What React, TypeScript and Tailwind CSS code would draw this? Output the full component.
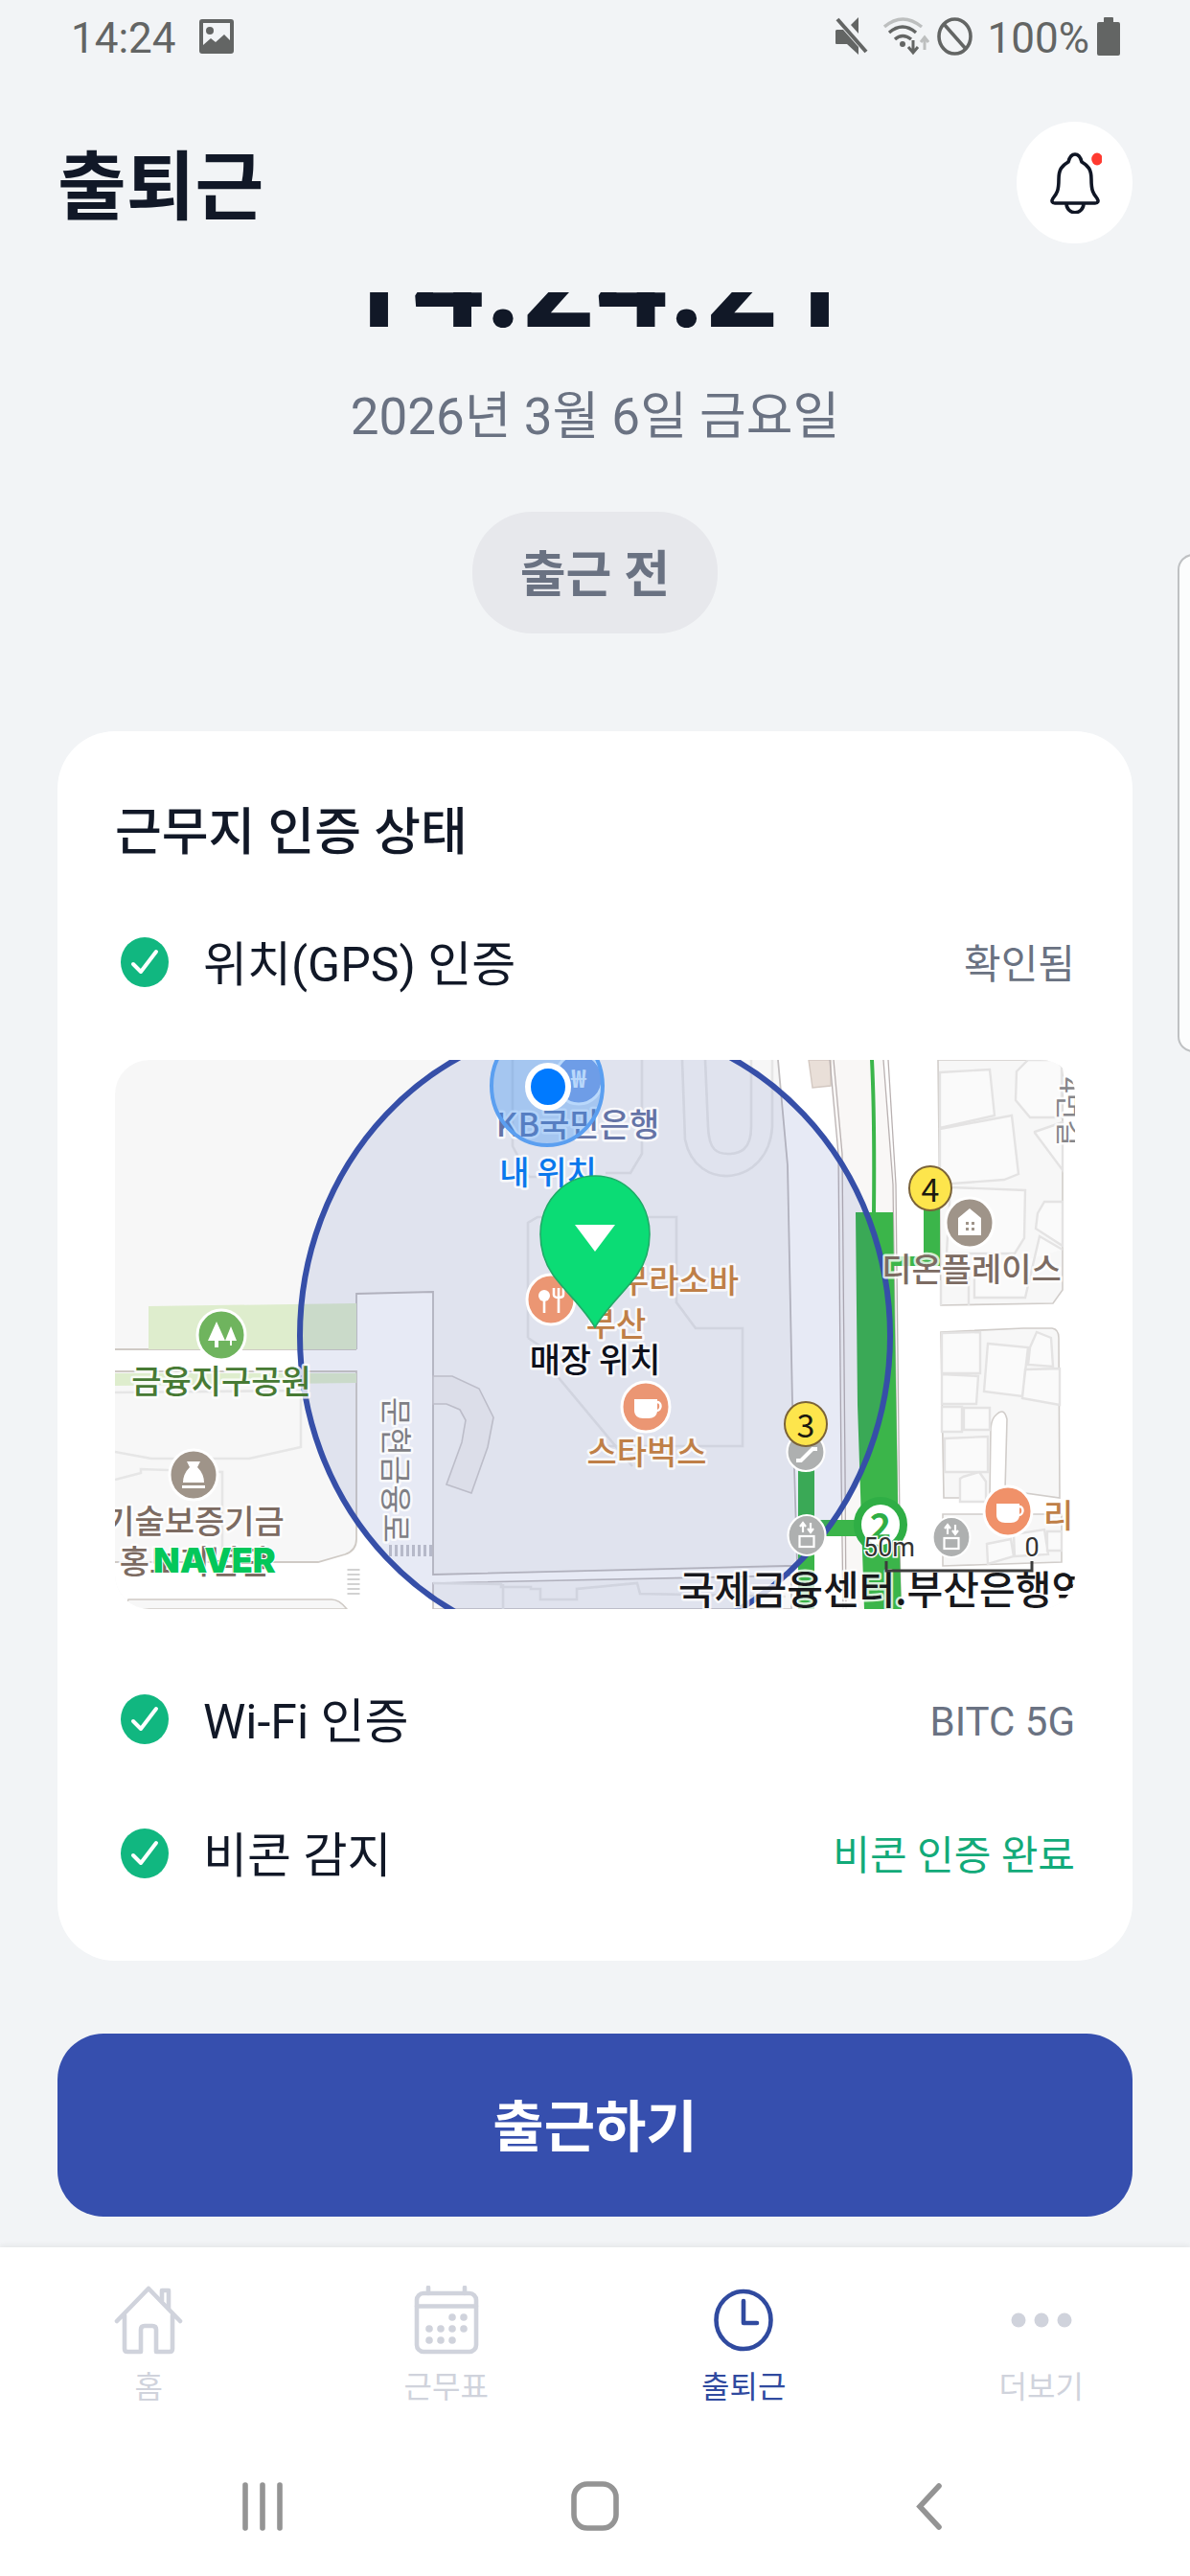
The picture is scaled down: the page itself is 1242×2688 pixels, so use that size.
import { useState } from "react";
import type { ReactNode } from "react";

type Check = { label: string; value: string; tone: string };
type MapLabelProps = {
  x: number;
  y: number;
  color: string;
  size?: number;
  anchor?: "start" | "middle" | "end";
  weight?: number;
  children: ReactNode;
};

const gpsCheck: Check = { label: "위치(GPS) 인증", value: "확인됨", tone: "text-gray-500" };
const otherChecks: Check[] = [
  { label: "Wi-Fi 인증", value: "BITC 5G", tone: "text-gray-500" },
  { label: "비콘 감지", value: "비콘 인증 완료", tone: "text-[#12aa79]" },
];

function StatusBar() {
  return (
    <div className="flex h-20 items-center justify-between pl-[74px] pr-[73px] text-[44px] leading-none text-[#636564]">
      <div className="flex items-center gap-6">
        <span>14:24</span>
        <svg className="mb-1 h-9 w-9" viewBox="0 0 36 36" fill="currentColor">
          <path
            fillRule="evenodd"
            d="M3 0h30a3 3 0 0 1 3 3v30a3 3 0 0 1-3 3H3a3 3 0 0 1-3-3V3a3 3 0 0 1 3-3Zm1 4v23l8-7 5 4 9-8 6 6V4Z"
          />
          <circle cx="11" cy="12" r="4" />
        </svg>
      </div>
      <div className="flex items-center">
        {/* 무음 */}
        <svg className="mb-1 mr-4 h-10 w-[34px]" viewBox="0 0 34 40" fill="currentColor">
          <path d="M1 13h7l16 18v8L12 28H1a1 1 0 0 1-1-1V14ZM24 0v17l-8-9Z" />
          <path d="m2 2 30 34" stroke="currentColor" strokeWidth="4" />
        </svg>
        {/* 와이파이 */}
        <svg className="mb-1 mr-2 h-10 w-12" viewBox="0 0 48 40" fill="none" stroke="currentColor" strokeWidth="3.4">
          <path d="M1 10Q20-6 40 10" stroke="#bdbfbf" />
          <path d="M6 16q14-12 28 0M12 23q8-7 17 0" />
          <circle cx="20" cy="28" r="3" fill="currentColor" stroke="none" />
          <path d="M31 24v12m-5-5 5 6 5-6" strokeWidth="3" />
          <path d="M43 34V22m-4 4 4-5 4 5" stroke="#bdbfbf" strokeWidth="3" />
        </svg>
        <svg className="mb-1 mr-4 h-10 w-[37px]" viewBox="0 0 37 40" fill="none" stroke="currentColor" strokeWidth="3.6">
          <ellipse cx="18.5" cy="20" rx="16.5" ry="18" />
          <path d="m7 7 23 26" />
        </svg>
        <span className="mr-2">100%</span>
        <svg className="mb-1 h-10 w-6" viewBox="0 0 24 40" fill="currentColor">
          <path d="M8 0h8a1 1 0 0 1 1 1v4h5a2 2 0 0 1 2 2v31a2 2 0 0 1-2 2H2a2 2 0 0 1-2-2V7a2 2 0 0 1 2-2h5V1a1 1 0 0 1 1-1Z" />
        </svg>
      </div>
    </div>
  );
}

function Header() {
  return (
    <header className="flex items-center justify-between px-[60px] pb-[51px] pt-[47px]">
      <h1 className="pt-3 text-[78px] font-bold leading-[88px]">출퇴근</h1>
      <button
        type="button"
        aria-label="알림"
        className="flex h-[127px] w-[121px] items-center justify-center rounded-[50%] bg-white"
      >
        <svg className="h-[64px] w-[56px]" viewBox="0 0 56 64" fill="none" stroke="#101625" strokeWidth="3.6" strokeLinejoin="round">
          <path d="M21 10c1-4 3-8 7-8s6 4 7 8c7 4 10 8 10 18 0 12 2 15 6 20 2 3 1 5-2 5H7c-3 0-4-2-2-5 4-5 6-8 6-20 0-10 3-14 10-18Z" />
          <path d="M19 53c0 13 18 13 18 0" />
          <ellipse cx="51" cy="7" rx="5.8" ry="6.5" fill="#ff3a30" stroke="none" />
        </svg>
      </button>
    </header>
  );
}

function CheckRow({ check }: { check: Check }) {
  return (
    <div className="flex h-16 items-center pl-1.5">
      <svg className="mr-[36px] h-[52px] w-[50px] shrink-0" viewBox="0 0 50 52">
        <ellipse cx="25" cy="26" rx="25" ry="26" fill="#11b780" />
        <path d="m13 28 8 8 16-21" fill="none" stroke="#fff" strokeWidth="4" strokeLinecap="round" strokeLinejoin="round" />
      </svg>
      <span className="pt-1.5 text-[50px] leading-[64px]">{check.label}</span>
      <span className={`ml-auto pt-1.5 text-[42px] leading-[64px] ${check.tone}`}>{check.value}</span>
    </div>
  );
}

function MapLabel({ x, y, color, size = 34, anchor = "middle", weight = 500, children }: MapLabelProps) {
  return (
    <text
      x={x}
      y={y}
      fill={color}
      fontSize={size}
      fontWeight={weight}
      textAnchor={anchor}
      stroke="#fff"
      strokeOpacity="0.8"
      strokeWidth="5"
      strokeLinejoin="round"
      paintOrder="stroke"
    >
      {children}
    </text>
  );
}

function Poi({ x, y, color, children }: { x: number; y: number; color: string; children: ReactNode }) {
  return (
    <g transform={`translate(${x} ${y})`}>
      <ellipse rx="25" ry="26" fill={color} stroke="#fff" strokeWidth="3" />
      {children}
    </g>
  );
}

function Cup() {
  return (
    <>
      <path d="M-12-8h24V4c0 5-4 8-9 8h-6c-5 0-9-3-9-8Z" fill="#fff" />
      <path d="M11-5c6-1 6 9 0 9" fill="none" stroke="#fff" strokeWidth="2.5" />
    </>
  );
}

function Elevator({ x, y }: { x: number; y: number }) {
  return (
    <g transform={`translate(${x} ${y})`} fill="none" stroke="#fff" strokeWidth="2.2">
      <ellipse rx="19.5" ry="21" fill="#aeb0b0" />
      <rect x="-7.5" y="1" width="15" height="11" />
      <path d="M-4-3v-9m-3 3 3-4 3 4M4-13v9m-3-3 3 4 3-4" />
    </g>
  );
}

function ExitBadge({ x, y, n }: { x: number; y: number; n: number }) {
  return (
    <>
      <ellipse cx={x} cy={y} rx="22" ry="23" fill="#fde54c" stroke="#7b6338" strokeWidth="2" />
      <text x={x} y={y + 14} fontSize="34" fontWeight="400" textAnchor="middle" fill="#1c1a10">
        {n}
      </text>
    </>
  );
}

function WorkplaceMap() {
  return (
    <svg
      viewBox="0 0 1002 573"
      role="img"
      aria-label="근무지 지도"
      className="block w-full rounded-[36px] font-['Noto_Sans_CJK_KR',sans-serif]"
    >
      <rect width="1002" height="573" fill="#f7f7f7" />

      {/* 도로 */}
      <g fill="#fff">
        <path d="M252 573V244L332 242V537L706 530V573Z" />
        <path d="M0 302H260V325H0Z" />
        <path d="M692 0 702 110 707 358 710 573H777V0Z" />
        <path d="M724 0H1002V573H710V0Z" />
        <path d="M0 524H212L240 516Q252 512 252 500V573H0Z" />
      </g>
      <path d="M252 302V244L332 242V537L700 528H712L707 358 702 110 692 0" fill="none" stroke="#c2bfc0" strokeWidth="1.8" />
      <path d="M0 302H252M0 325H252V500Q252 512 240 516L212 524H0" fill="none" stroke="#cfcac5" strokeWidth="1.8" />
      <path d="M332 573V546L706 538V573Z" fill="#f7f7f7" stroke="#c2bfc0" strokeWidth="1.6" />
      <path d="M14 563H226Q234 563 242 573H10Z" fill="#f7f7f7" stroke="#cfcac5" strokeWidth="1.6" />
      <path d="M35 257 252 254V302H35ZM0 327H252V337L0 340Z" fill="#deedcd" />
      <path d="M332 330h20l28 13 15 30-6 31-17 48-26-9 16-44 4-23-6-11-14-6h-14Z" fill="#f3f2f2" stroke="#cfcccd" strokeWidth="1.6" />

      {/* 건물 윤곽 */}
      <g fill="none" stroke="#e6e6e6" strokeWidth="2.6">
        <path d="M0 409 38 416H140L194 404V345L0 347M0 438 27 431V427L112 430V522" />
        <path d="M592 0 595 83C606 139 682 132 686 70V0M616 0 619 70C620 94 628 98 640 98S664 94 664 70V0" />
        <path d="M415 0V90L432 122H460M550 0V98L538 118H512M431 290V170L441 164H586V253L606 280H655V403H510M431 290 455 306V322L540 424" />
        <path d="M332 546 403 547V550H434V552H444V563H482V552L545 546L548 557 700 560M405 547V573" />
      </g>
      <g stroke="#d1cdca" strokeWidth="1.6" fill="#f7f7f7">
        <path d="M859 0H976Q989 2 989 16V240L979 254 862 256Z" />
        <path d="M862 284 948 280H978Q985 281 985 290L986 457 929 449 931 375Q928 362 920 370 915 374 914 384L913 457H865Z" />
        <path d="M864 474H988V524L864 528Z" />
      </g>
      <g stroke="#e4e3e3" strokeWidth="2.4" fill="#fafafa">
        <path d="M861 13 913 10 918 58 861 71Z" />
        <path d="M861 72 936 58 943 119 928 125 861 130Z" />
        <path d="M941 12 953 0H988V60H955L940 42Z" />
        <path d="M872 133 950 136 949 186 939 202H868Z" />
        <path d="M960 75 989 65V115L960 76ZM963 160 970 148H989V194L961 176Z" />
        <path d="M897 224V248H950L965 184 989 198M862 230V256M891 226V256" />
        <path d="M863 285 903 284V327H863ZM863 328 901 330 899 359H863ZM863 362H884V388H863ZM886 363H913V386H886Z" />
        <path d="M911 296 953 300 947 351 907 346ZM955 300 962 284 977 290 979 320 953 318ZM950 323 986 322V360L947 353Z" />
        <path d="M866 395 911 393V430H866ZM885 435 902 430 909 440V461H882V437Z" />
        <path d="M910 505 935 500 938 518 911 526ZM938 495 970 490 974 516 939 518ZM973 492H988V512H973Z" />
      </g>

      {/* 대로와 지하철 노선 */}
      <path d="M746 0 756 98 759 573H820L814 130 802 0Z" fill="#f9f7f6" />
      <path d="M724 0H747V27L728 29Z" fill="#e9dfd8" stroke="#d3c8c1" strokeWidth="1.4" />
      <path
        d="M746 0 755 98 758 430 760 573M750 0 759 98 762 430 763 573M802 0 812 130 818 573M807 0 815 130 820 573"
        fill="none"
        stroke="#b9b1b1"
        strokeWidth="1.3"
      />
      <g fill="#3bb54a">
        <path d="M773 159H812L817 460 821 573H782L775 360Z" />
        <path d="M713 425H730V573H713ZM735 480H780V497H735ZM844 150H861V215H812V205H844Z" />
        <path d="M790 0Q793 60 792 160" fill="none" stroke="#3bb54a" strokeWidth="4" />
      </g>

      {/* 횡단보도 */}
      <path d="M286 512H331" stroke="#c8c8cd" strokeWidth="12" strokeDasharray="3 3" />
      <path d="M249 531V561" stroke="#d2d2d2" strokeWidth="13" strokeDasharray="2 3" />

      {/* 인증 반경 */}
      <ellipse cx="501" cy="288" rx="308" ry="327" fill="#364fae" fillOpacity="0.12" stroke="#364fa8" strokeWidth="6" />

      {/* 장소 표시 */}
      <Poi x={111} y={287} color="#6fb45e">
        <path d="M-5-14-14 6h7v7h4V6h7ZM10-9 4 6h5v5h2V6h5Z" fill="#fff" />
      </Poi>
      <Poi x={82} y={433} color="#9f9489">
        <path d="M-7-14H7L4-8Q11-1 11 8H-11Q-11-1-4-8ZM-12 11H12V14H-12Z" fill="#fff" />
      </Poi>
      <Poi x={892} y={170} color="#9f9489">
        <path d="M0-15 12-5V13H-12V-5Z" fill="#fff" />
        <path d="M-4-1h3v3h-3ZM2-1h3v3H2ZM-4 5h3v3h-3ZM2 5h3v3H2Z" fill="#9f9489" />
      </Poi>
      <Poi x={455} y={250} color="#eb9673">
        <circle cx="-7" cy="-4" r="6" fill="#fff" />
        <path d="M-7 0V14M8-4V14M3-12V-5Q3-2 8-2T13-5V-12M8-12V0" fill="none" stroke="#fff" strokeWidth="2.6" />
      </Poi>
      <Poi x={554} y={362} color="#eb9673">
        <Cup />
      </Poi>
      <Poi x={932} y={471} color="#f09169">
        <Cup />
      </Poi>
      <Poi x={484} y={20} color="#8aa3e0">
        <text y="9" fontSize="26" fontWeight="700" textAnchor="middle" fill="#fff">
          ₩
        </text>
      </Poi>

      <MapLabel x={83} y={494} color="#7c6b62">기술보증기금</MapLabel>
      <MapLabel x={83} y={536} color="#7c6b62">홍보기념관</MapLabel>
      <MapLabel x={483} y={80} color="#6473a6">KB국민은행</MapLabel>
      <MapLabel x={651} y={243} color="#bf7f47" anchor="end">무라소바</MapLabel>
      <MapLabel x={523} y={288} color="#bf7f47">부산</MapLabel>
      <MapLabel x={555} y={422} color="#bf7f47">스타벅스</MapLabel>
      <MapLabel x={969} y={488} color="#bf7f47" anchor="start">리</MapLabel>
      <g transform="translate(281 428) rotate(90)">
        <MapLabel x={0} y={0} color="#7f7f85" size={33} weight={400}>문현금융로</MapLabel>
      </g>
      <g transform="translate(986 54) rotate(90)">
        <MapLabel x={0} y={0} color="#86868a" size={30} weight={400}>4번길</MapLabel>
      </g>
      <MapLabel x={111} y={348} color="#477a34">금융지구공원</MapLabel>
      <MapLabel x={894} y={231} color="#7c6b62">디온플레이스</MapLabel>

      <g transform="translate(721 409)" stroke="#fff">
        <ellipse rx="19.5" ry="20" fill="#aeb0b0" strokeWidth="2.2" />
        <path d="M-10 9h5L7-3h5" fill="none" strokeWidth="4" />
      </g>
      <Elevator x={722} y={496} />
      <Elevator x={873} y={498} />
      <ExitBadge x={721} y={380} n={3} />
      <ExitBadge x={851} y={134} n={4} />
      <ellipse cx="799" cy="485" rx="24" ry="25" fill="#fff" stroke="#2fae45" strokeWidth="8" />
      <text x="799" y="500" fontSize="38" fontWeight="700" textAnchor="middle" fill="#2fae45">
        2
      </text>
      <MapLabel x={588} y={568} color="#17181c" size={41} anchor="start">국제금융센터.부산은행역</MapLabel>

      {/* 내 위치 */}
      <ellipse cx="451" cy="27" rx="58" ry="62" fill="#3d93f5" fillOpacity="0.36" stroke="#5b9ff0" strokeWidth="4" />
      <ellipse cx="452" cy="28" rx="21" ry="22" fill="#007aff" stroke="#fff" strokeWidth="6" />
      <MapLabel x={452} y={130} color="#0a78ec">내 위치</MapLabel>

      {/* 매장 위치 */}
      <path
        d="M501 279C489 258 469 241 457 224 448 211 444 197 444 182 444 148 469 121 501 121S558 148 558 182C558 197 554 211 545 224 533 241 513 258 501 279Z"
        fill="#0bdc75"
        stroke="#1fab67"
        strokeWidth="1.6"
      />
      <path d="M480 172H522L501 200Z" fill="#fff" />
      <MapLabel x={501} y={326} color="#0d101b" size={35}>매장 위치</MapLabel>

      {/* 로고와 축척 */}
      <text x="40" y="535" fontFamily="Inter, sans-serif" fontSize="36" fontWeight="900" fill="#03c75a" stroke="#fff" strokeWidth="2" paintOrder="stroke">
        NAVER
      </text>
      <g fontFamily="Roboto, sans-serif" fontSize="27" textAnchor="middle" fill="#333" stroke="#fff" strokeWidth="3" paintOrder="stroke">
        <text x="808" y="518">50m</text>
        <text x="957" y="518">0</text>
      </g>
      <path d="M805 523V533H957V523" fill="none" stroke="#3c3c3c" strokeWidth="3" />
    </svg>
  );
}

const tabs = [
  {
    id: "home",
    label: "홈",
    icon: (
      <>
        <path d="M3 37 36 3 69 37M11 31V66Q11 69 14 69H28V46Q28 42 32 42H40Q44 42 44 46V69H58Q61 69 61 66V31" />
        <path d="M50 16V5H57V24" />
      </>
    ),
  },
  {
    id: "schedule",
    label: "근무표",
    icon: (
      <>
        <rect x="5" y="8" width="62" height="61" rx="7" />
        <path d="M5 21.5H67M17 2V8M55 2V8" />
        <g fill="currentColor" stroke="none">
          <circle cx="42" cy="33" r="3.8" />
          <circle cx="54" cy="33" r="3.8" />
          <circle cx="18" cy="45" r="3.8" />
          <circle cx="30" cy="45" r="3.8" />
          <circle cx="42" cy="45" r="3.8" />
          <circle cx="54" cy="45" r="3.8" />
          <circle cx="18" cy="57" r="3.8" />
          <circle cx="30" cy="57" r="3.8" />
          <circle cx="42" cy="57" r="3.8" />
        </g>
      </>
    ),
  },
  {
    id: "commute",
    label: "출퇴근",
    icon: (
      <>
        <ellipse cx="36" cy="36" rx="28.5" ry="30" />
        <path d="M36 16V39H50" />
      </>
    ),
  },
  {
    id: "more",
    label: "더보기",
    icon: (
      <g fill="currentColor" stroke="none">
        <circle cx="12" cy="36" r="7.5" />
        <circle cx="36" cy="36" r="7.5" />
        <circle cx="60" cy="36" r="7.5" />
      </g>
    ),
  },
];

function TabBar() {
  const [active, setActive] = useState("commute");

  return (
    <nav className="grid grid-cols-4 bg-white pt-10 shadow-[0_-2px_6px_rgba(0,0,0,0.06)]">
      {tabs.map((tab) => (
        <button
          key={tab.id}
          type="button"
          onClick={() => setActive(tab.id)}
          className={`flex flex-col items-center gap-3 ${active === tab.id ? "text-[#304a9f]" : "text-[#d0d3dc]"}`}
        >
          <svg className="h-[72px] w-[72px]" viewBox="0 0 72 72" fill="none" stroke="currentColor" strokeWidth="4.6" strokeLinecap="round" strokeLinejoin="round">
            {tab.icon}
          </svg>
          <span className="text-[32px] leading-[44px]">{tab.label}</span>
        </button>
      ))}
    </nav>
  );
}

function SystemNav() {
  return (
    <div className="flex items-center justify-center gap-[275px] bg-white pb-[46px] pt-[75px] text-[#949494]">
      <button type="button" aria-label="최근 앱">
        <svg className="h-[54px] w-[72px]" viewBox="0 0 72 54" stroke="currentColor" strokeWidth="5.6" strokeLinecap="round">
          <path d="M18 5V50M36 5V50M54 5V50" />
        </svg>
      </button>
      <button type="button" aria-label="홈 화면">
        <svg className="h-[54px] w-[72px]" viewBox="0 0 72 54" fill="none" stroke="currentColor" strokeWidth="5.6">
          <rect x="14" y="4" width="44" height="46" rx="14" />
        </svg>
      </button>
      <button type="button" aria-label="뒤로">
        <svg className="h-[54px] w-[72px]" viewBox="0 0 72 54" fill="none" stroke="currentColor" strokeWidth="5.6" strokeLinecap="round">
          <path d="M48 6 28 27.5 48 49" />
        </svg>
      </button>
    </div>
  );
}

export default function App() {
  return (
    <div className="relative flex min-h-screen flex-col overflow-hidden bg-[#f2f4f6] font-[Roboto,'Noto_Sans_CJK_KR',sans-serif] text-[#111827]">
      <StatusBar />
      <Header />

      <main className="flex-1 overflow-hidden px-[60px] pb-8">
        {/* 스크롤되어 헤더 아래로 일부가 가려진 시계 */}
        <section className="-mt-[76px] flex flex-col items-center">
          <time className="text-[134px] font-bold leading-none">14:24:21</time>
          <p className="mt-10 text-[53px] leading-[64px] text-gray-500">2026년 3월 6일 금요일</p>
          <span className="mt-[67px] flex h-[127px] items-center rounded-[62px] bg-[#e7e8ec] px-[50px] pt-1.5 text-[52px] font-bold text-gray-500">
            출근 전
          </span>
        </section>

        <section className="mt-[102px] rounded-[60px] bg-white px-[60px] pb-20 pt-[72px]">
          <h2 className="pt-0.5 text-[53px] font-medium leading-[64px]">근무지 인증 상태</h2>
          <div className="mb-[70px] mt-[71px]">
            <CheckRow check={gpsCheck} />
          </div>
          <WorkplaceMap />
          <div className="mt-[83px] flex flex-col gap-[76px]">
            {otherChecks.map((check) => (
              <CheckRow key={check.label} check={check} />
            ))}
          </div>
        </section>

        <button
          type="button"
          className="mt-[76px] flex h-[191px] w-full items-center justify-center rounded-[48px] bg-[#364fae] pt-1.5 text-[58px] font-bold text-white"
        >
          출근하기
        </button>
      </main>

      <TabBar />
      <SystemNav />

      {/* 엣지 패널 핸들 */}
      <div className="absolute -right-5 top-[578px] h-[520px] w-[33px] rounded-[18px] border-2 border-[#bfc1c3] bg-[#fcfdfd]" />
    </div>
  );
}
